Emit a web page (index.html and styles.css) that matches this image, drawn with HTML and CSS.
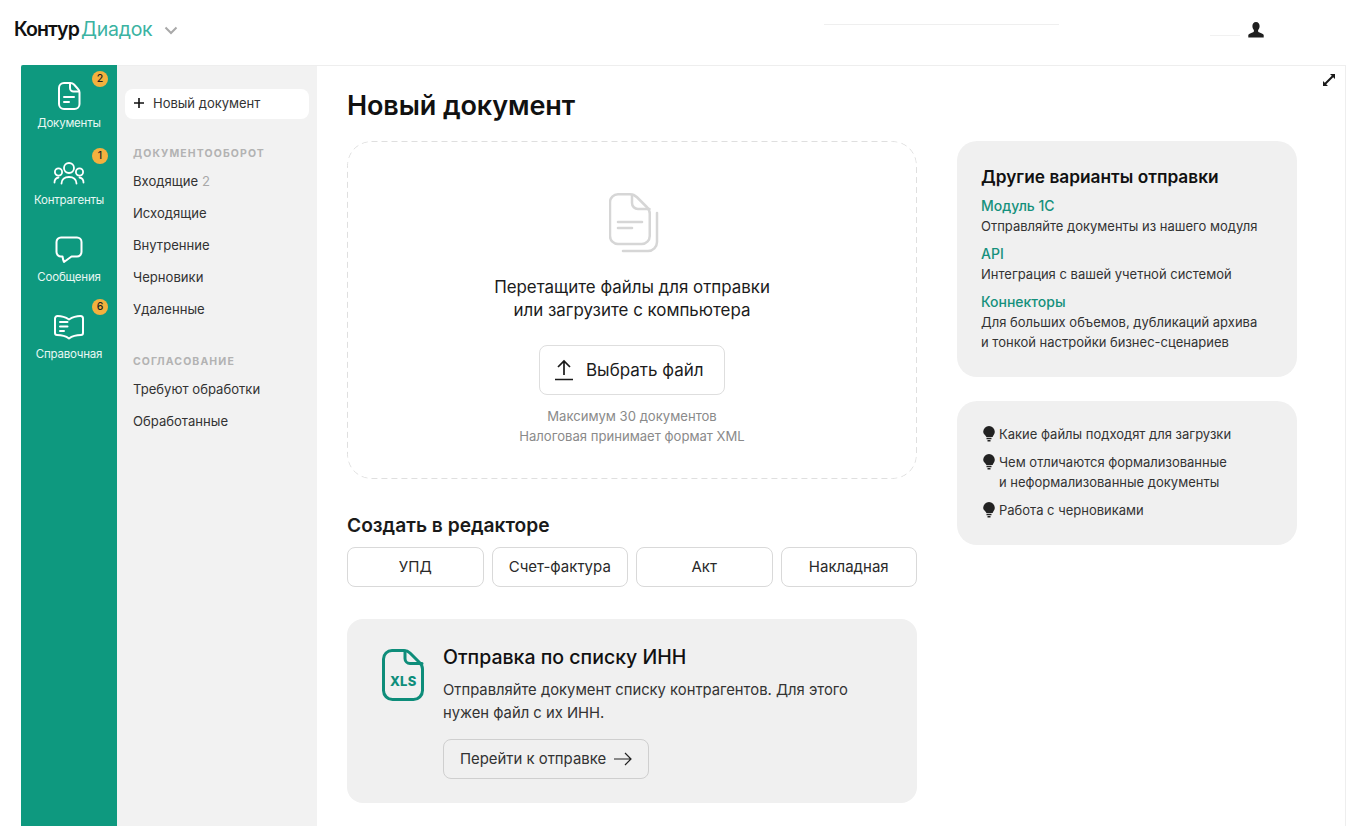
FILE: index.html
```html
<!DOCTYPE html>
<html lang="ru">
<head>
<meta charset="utf-8">
<title>Контур Диадок</title>
<link rel="stylesheet" href="styles.css">
</head>
<body>
<header class="topbar">
  <div class="logo"><span class="logo-k">Контур</span><span class="logo-d">Диадок</span></div>
  <svg class="chev" width="14" height="9" viewBox="0 0 14 9"><path d="M1.500 1.500 7 7l5.500-5.500" fill="none" stroke="#a9a9a9" stroke-width="2"/></svg>
  <span class="faint-a"></span>
  <span class="faint-b"></span>
  <svg class="user" width="16" height="16" viewBox="0 0 16 16"><path d="M8 0c2.300 0 3.600 1.800 3.600 4 0 1.600-.6 3-1.500 3.900v1.300c0 .7 1 1.100 2.600 1.700 1.700.6 2.800 1.300 3 2.100v2.500H.3V13c.2-.8 1.300-1.500 3-2.100 1.600-.6 2.600-1 2.600-1.700V7.900C5 7 4.400 5.600 4.400 4 4.400 1.800 5.700 0 8 0z" fill="#1f1f1f"/></svg>
</header>
<div class="frame">
  <nav class="rail">
    <a class="rail-item ri-docs"><span class="badge">2</span>
      <svg width="24" height="30" viewBox="0 0 24 30" fill="none" stroke="#fff" stroke-width="2" stroke-linejoin="round" stroke-linecap="round"><path d="M7 2h6.500c1.500 0 2.500.5 3.500 1.500l4 4.500c1 1 1.500 2 1.500 3.500V23a5 5 0 0 1-5 5H7a5 5 0 0 1-5-5V7a5 5 0 0 1 5-5z"/><path d="M13 2.500V7a3.500 3.500 0 0 0 3.500 3.500H22M7 16h10M7 21h5"/></svg>
      <span class="rail-label">Документы</span></a>
    <a class="rail-item ri-cont"><span class="badge">1</span>
      <svg width="32" height="24" viewBox="0 0 32 24" fill="none" stroke="#fff" stroke-width="1.800" stroke-linecap="round"><circle cx="16" cy="7" r="5"/><circle cx="5.500" cy="11" r="3.600"/><circle cx="26.500" cy="11" r="3.600"/><path d="M8.500 22.500c0-4 3-6.500 7.500-6.500s7.500 2.500 7.500 6.500M1.500 21.500c0-3 1.500-4.500 4-5M30.500 21.500c0-3-1.500-4.500-4-5"/></svg>
      <span class="rail-label">Контрагенты</span></a>
    <a class="rail-item ri-msg">
      <svg width="28" height="28" viewBox="0 0 28 28" fill="none" stroke="#fff" stroke-width="2" stroke-linejoin="round"><path d="M6 1.500h16a4.500 4.500 0 0 1 4.500 4.500v10a4.500 4.500 0 0 1-4.500 4.500h-5.500L9 26c-.8-1.800-1.200-3.500-1.500-5.500H6A4.500 4.500 0 0 1 1.500 16V6A4.500 4.500 0 0 1 6 1.500z"/></svg>
      <span class="rail-label">Сообщения</span></a>
    <a class="rail-item ri-ref"><span class="badge">6</span>
      <svg width="30" height="26" viewBox="0 0 30 26" fill="none" stroke="#fff" stroke-width="2" stroke-linejoin="round" stroke-linecap="round"><path d="M15 5.500C12 3.500 8 2 3.500 2A2.500 2.500 0 0 0 1 4.500V19a2 2 0 0 0 2 2c4 0 8 .5 12 3.500 4-3 8-3.500 12-3.500a2 2 0 0 0 2-2V4.500A2.500 2.500 0 0 0 26.500 2C22 2 18 3.500 15 5.500z"/><path d="M6 8h7.500M6 12.500h7.500M6 17h4"/></svg>
      <span class="rail-label">Справочная</span></a>
  </nav>
  <aside class="side">
    <a class="new-doc"><svg width="10" height="10" viewBox="0 0 10 10"><path d="M5 0v10M0 5h10" stroke="#111" stroke-width="1.600"/></svg>Новый документ</a>
    <div class="side-head">ДОКУМЕНТООБОРОТ</div>
    <a class="side-link">Входящие <span class="count">2</span></a>
    <a class="side-link">Исходящие</a>
    <a class="side-link">Внутренние</a>
    <a class="side-link">Черновики</a>
    <a class="side-link">Удаленные</a>
    <div class="side-head second">СОГЛАСОВАНИЕ</div>
    <a class="side-link">Требуют обработки</a>
    <a class="side-link">Обработанные</a>
  </aside>
  <main class="main">
    <svg class="expand" width="12" height="12" viewBox="0 0 12 12" fill="#1a1a1a"><path d="M7 0h5v5l-1.800-1.800L3.200 10.200 5 12H0V7l1.800 1.800 7-7z"/></svg>
    <div class="col-left">
      <h1 class="title">Новый документ</h1>
      <section class="drop">
        <svg class="drop-icon" width="50" height="60" viewBox="0 0 50 60" fill="none" stroke="#d6d6d6" stroke-width="2.500" stroke-linecap="round" stroke-linejoin="round"><path d="M9 1.250h12c3 0 5 1 7 3l9.500 9.500c2 2 3.250 4 3.250 7V43a8 8 0 0 1-8 8H9a8 8 0 0 1-8-8V9.250a8 8 0 0 1 8-8z"/><path d="M23 2v8a6 6 0 0 0 6 6h11.500M9 29h24M9 35h14"/><path d="M48 20v29a9 9 0 0 1-9 9H14"/></svg>
        <p class="drop-text">Перетащите файлы для отправки<br>или загрузите с компьютера</p>
        <a class="pick"><svg width="20" height="22" viewBox="0 0 20 22" fill="none" stroke="#1a1a1a" stroke-width="1.700"><path d="M10 16V2M4 8l6-6 6 6M1 20.500h18"/></svg>Выбрать файл</a>
        <p class="drop-note">Максимум 30 документов<br>Налоговая принимает формат XML</p>
      </section>
      <h2 class="sub">Создать в редакторе</h2>
      <div class="editors">
        <a class="ed">УПД</a><a class="ed">Счет-фактура</a><a class="ed">Акт</a><a class="ed">Накладная</a>
      </div>
      <section class="inn">
        <div class="xls"><svg width="42" height="52" viewBox="0 0 42 52" fill="none" stroke="#0e8d7a" stroke-width="3" stroke-linejoin="round" stroke-linecap="round"><path d="M10 1.500h12c2.500 0 4.500 1 6 2.500l9.500 9.500c2 2 3 4 3 6.500v21.500a9 9 0 0 1-9 9H10.500a9 9 0 0 1-9-9V10A8.500 8.500 0 0 1 10 1.500z"/><path d="M23 2v7.500a5 5 0 0 0 5 5h12"/></svg><span class="xls-t">XLS</span></div>
        <div class="inn-body">
          <h3 class="inn-title">Отправка по списку ИНН</h3>
          <p class="inn-text">Отправляйте документ списку контрагентов. Для этого<br>нужен файл с их ИНН.</p>
          <a class="go">Перейти к отправке<svg width="18" height="14" viewBox="0 0 18 14" fill="none" stroke="#222" stroke-width="1.200"><path d="M0 7h17M11 1l6 6-6 6"/></svg></a>
        </div>
      </section>
    </div>
    <div class="col-right">
      <section class="card opts">
        <h3 class="card-title">Другие варианты отправки</h3>
        <a class="opt-link">Модуль 1С</a>
        <p class="opt-text">Отправляйте документы из нашего модуля</p>
        <a class="opt-link">API</a>
        <p class="opt-text">Интеграция с вашей учетной системой</p>
        <a class="opt-link">Коннекторы</a>
        <p class="opt-text">Для больших объемов, дубликаций архива<br>и тонкой настройки бизнес-сценариев</p>
      </section>
      <section class="card tips">
        <div class="tip"><svg class="bulb" width="12" height="16" viewBox="0 0 12 16"><path d="M6 0a5.800 5.800 0 0 1 5.800 5.800c0 2.200-1.500 3.400-2.200 5.200H3.400C2.700 9.200 0 8 .2 5.800A5.800 5.800 0 0 1 6 0z" fill="#222"/><path d="M3.500 12.500h5M4.500 14.800h3" stroke="#222" stroke-width="1.500"/></svg><span>Какие файлы подходят для загрузки</span></div>
        <div class="tip"><svg class="bulb" width="12" height="16" viewBox="0 0 12 16"><path d="M6 0a5.800 5.800 0 0 1 5.800 5.800c0 2.200-1.500 3.400-2.200 5.200H3.400C2.700 9.200 0 8 .2 5.800A5.800 5.800 0 0 1 6 0z" fill="#222"/><path d="M3.500 12.500h5M4.500 14.800h3" stroke="#222" stroke-width="1.500"/></svg><span>Чем отличаются формализованные<br>и неформализованные документы</span></div>
        <div class="tip"><svg class="bulb" width="12" height="16" viewBox="0 0 12 16"><path d="M6 0a5.800 5.800 0 0 1 5.800 5.800c0 2.200-1.500 3.400-2.200 5.200H3.400C2.700 9.200 0 8 .2 5.800A5.800 5.800 0 0 1 6 0z" fill="#222"/><path d="M3.500 12.500h5M4.500 14.800h3" stroke="#222" stroke-width="1.500"/></svg><span>Работа с черновиками</span></div>
      </section>
    </div>
  </main>
</div>
</body>
</html>
```
FILE: styles.css
```css
* { box-sizing: border-box; }
html, body { margin: 0; height: 826px; overflow: hidden; background: #fff; }
body { font-family: Inter, "Liberation Sans", sans-serif; color: #222; font-size: 13px; }
p, h1, h2, h3 { margin: 0; }

.topbar { height: 65px; display: flex; align-items: center; padding: 0 102px 7px 14px; }
.logo { font-size: 19.500px; letter-spacing: -0.25px; display: flex; }
.logo-k { color: #111; font-weight: 600; margin-right: 2px; letter-spacing: -0.9px; }
.logo-d { color: #3bb3a2; }
.chev { margin-left: 12px; margin-top: 2px; flex: none; }
.faint-a { align-self: flex-start; margin: 24px 0 0 646px; width: 235px; height: 1px; background: #efefef; }
.faint-b { align-self: flex-start; margin: 35px 0 0 auto; width: 30px; height: 1px; background: #f1f1f1; }
.user { margin-left: 8px; margin-top: 2px; flex: none; }

.frame { display: flex; height: 761px; margin: 0 20px 0 21px; border-top: 1px solid #eee; border-right: 1px solid #eee; }
.rail { width: 96px; background: #0e997f; flex: none; border-radius: 2px 0 0 0; margin-top: -1px; position: relative; }
.rail-item { display: flex; flex-direction: column; align-items: center; position: relative; color: #e8f7f3; }
.rail-label { font-size: 11.500px; letter-spacing: -0.2px; line-height: 14px; }
.ri-docs { height: 77px; padding-top: 16px; }
.ri-docs .rail-label { margin-top: 5px; }
.ri-cont { height: 77px; padding-top: 19px; }
.ri-cont .rail-label { margin-top: 8px; }
.ri-msg { height: 77px; padding-top: 17px; }
.ri-msg .rail-label { margin-top: 6px; }
.ri-ref { height: 77px; padding-top: 18px; }
.ri-ref .rail-label { margin-top: 7px; }
.badge { position: absolute; right: 9px; top: 5px; width: 16px; height: 16px; border-radius: 50%; background: #f4b13e; color: #222; font-size: 10.500px; font-weight: 500; text-align: center; line-height: 16px; }
.ri-docs .badge { top: 6px; }
.ri-cont .badge { top: 6px; }
.ri-ref .badge { top: 3px; }

.side { width: 200px; flex: none; background: #f2f2f2; padding: 23px 8px 0; }
.new-doc { display: flex; align-items: center; gap: 9px; height: 30px; background: #fff; border-radius: 8px; padding: 0 0 2px 9px; font-size: 13px; color: #333; }
.side-head { margin: 28px 0 0 8px; font-size: 10.500px; font-weight: 700; letter-spacing: 1.100px; color: #b3b3b3; line-height: 14px; }
.side-head.second { margin-top: 30px; }
.side-link { display: flex; gap: 4px; margin-left: 8px; height: 32px; align-items: center; font-size: 13.100px; color: #333; }
.side-head + .side-link { margin-top: 4px; }
.count { color: #a8a8a8; }

.main { flex: 1; display: flex; gap: 40px; padding: 0 0 0 30px; position: relative; }
.expand { position: absolute; right: 10px; top: 8px; }
.col-left { width: 570px; flex: none; }
.col-right { width: 340px; flex: none; padding-top: 75px; }
.title { font-size: 27px; font-weight: 600; color: #111; line-height: 32px; padding-top: 24px; letter-spacing: -0.1px; }
.drop { height: 338px; margin-top: 19px; border-radius: 24px; display: flex; flex-direction: column; align-items: center; padding-top: 52px; background: url("data:image/svg+xml,%3Csvg xmlns='http://www.w3.org/2000/svg' width='570' height='338'%3E%3Crect x='.5' y='.5' width='569' height='337' rx='24' fill='none' stroke='%23dfdfdf' stroke-dasharray='6 4'/%3E%3C/svg%3E") no-repeat; }
.drop-icon { flex: none; margin-left: 4px; }
.drop-text { font-size: 16.900px; line-height: 23px; text-align: center; color: #1c1c1c; margin-top: 23px; }
.pick { display: flex; align-items: center; gap: 12px; width: 186px; height: 50px; margin-top: 23px; padding-left: 14px; border: 1px solid #dedede; border-radius: 8px; font-size: 17px; color: #1c1c1c; }
.drop-note { margin-top: 11px; font-size: 13.100px; line-height: 20px; text-align: center; color: #8a8a8a; }
.sub { font-size: 19.200px; font-weight: 600; color: #1a1a1a; line-height: 26px; margin-top: 33px; }
.editors { display: grid; grid-template-columns: repeat(4, 1fr); gap: 8px; margin-top: 9px; }
.ed { height: 40px; display: flex; align-items: center; justify-content: center; border: 1px solid #d9d9d9; border-radius: 8px; font-size: 15px; color: #2a2a2a; padding-bottom: 1px; }
.inn { display: flex; height: 184px; margin-top: 32px; background: #f0f0f0; border-radius: 16px; padding: 24px 0 0 35px; gap: 19px; }
.xls { position: relative; width: 42px; height: 52px; margin-top: 6px; flex: none; }
.xls-t { position: absolute; left: 8px; top: 25px; color: #0e8d7a; font-size: 13px; font-weight: 800; line-height: 14px; letter-spacing: .2px; }
.inn-title { font-size: 19.500px; font-weight: 500; color: #111; line-height: 28px; }
.inn-text { font-size: 14.800px; line-height: 23px; color: #333; margin-top: 8px; }
.go { display: inline-flex; align-items: center; gap: 8px; height: 40px; width: 206px; margin-top: 14px; padding-left: 16px; border: 1px solid #cfcfcf; border-radius: 8px; font-size: 14.900px; color: #333; padding-bottom: 1px; }
.card { background: #f0f0f0; border-radius: 20px; width: 340px; }
.opts { height: 236px; padding: 23px 24px 0; }
.card-title { font-size: 17.300px; font-weight: 600; color: #111; line-height: 26px; }
.opt-link { display: block; margin-top: 6px; font-size: 14px; font-weight: 500; color: #15907c; line-height: 20px; }
.opt-text { font-size: 13px; line-height: 20px; color: #333; margin-bottom: 8px; }
.tips { height: 144px; margin-top: 24px; padding: 23px 26px 0; }
.tip { display: flex; gap: 4px; font-size: 13px; line-height: 20px; color: #333; margin-bottom: 8px; }
.bulb { flex: none; margin-top: 2px; }
```
